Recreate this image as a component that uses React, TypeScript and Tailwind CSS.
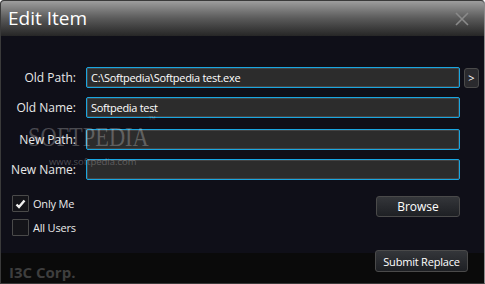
import React from 'react';

const font = { fontFamily: '"Open Sans", "Noto Sans", sans-serif' };

function Field({ label, value }: { label: string; value?: string }) {
  return (
    <div className="flex items-center h-[21px]">
      <span className="w-[75px] text-right text-[12px] text-[#e8e8e8] leading-none">{label}</span>
      <div className="ml-[10px] w-[374px] h-[21px] rounded-[2px] border border-[#1aa6e0] bg-[#2c2c2c] shadow-[inset_0_0_0_1px_#444] flex items-center px-[4px] text-[11px] tracking-[-0.3px] text-white leading-none">
        {value}
      </div>
    </div>
  );
}

function Check({ label, checked }: { label: string; checked?: boolean }) {
  return (
    <div className="flex items-center gap-[4px]">
      <div className="w-[17px] h-[17px] border border-[#4a4a4a] bg-[#141419] rounded-[1px] flex items-center justify-center">
        {checked && (
          <svg width="11" height="10" viewBox="0 0 11 10">
            <path d="M1.5 5.5 L4 8 L9.5 1.5" stroke="#f0f0f0" strokeWidth="2.4" fill="none" />
          </svg>
        )}
      </div>
      <span className="text-[11px] tracking-[-0.2px] text-[#eaeaea] leading-none">{label}</span>
    </div>
  );
}

export default function App() {
  return (
    <div style={font} className="relative w-[485px] h-[284px] bg-[#0f0f18] border border-[#3a3a3a] border-r-[#8a8a8a] rounded-t-[4px] overflow-hidden flex flex-col">
      {/* Title bar */}
      <div className="h-[35px] shrink-0 bg-gradient-to-b from-[#9e9e9e] via-[#5a5a5a] to-[#262626] flex items-center justify-between pl-[7px] pr-[15px]">
        <span className="text-[19px] text-white leading-none -mt-[1px]">Edit Item</span>
        <svg width="14" height="14" viewBox="0 0 14 14">
          <path d="M1 1 L13 13 M13 1 L1 13" stroke="#8a8a8a" strokeWidth="1.6" />
        </svg>
      </div>

      {/* Body */}
      <div className="flex-1 flex flex-col">
        <div className="pt-[31px] flex flex-col">
          <div className="flex items-center">
            <Field label="Old Path:" value="C:\Softpedia\Softpedia test.exe" />
            <div className="ml-[4px] w-[15px] h-[20px] rounded-[3px] border border-[#4a4a4a] bg-[#2a2a2e] flex items-center justify-center text-[11px] text-white leading-none">&gt;</div>
          </div>
          <div className="mt-[9px]"><Field label="Old Name:" value="Softpedia test" /></div>
          <div className="mt-[11px]"><Field label="New Path:" /></div>
          <div className="mt-[9px]"><Field label="New Name:" /></div>
        </div>

        <div className="mt-[15px] flex justify-between pl-[11px] pr-[24px]">
          <div className="flex flex-col gap-[7px]">
            <Check label="Only Me" checked />
            <Check label="All Users" />
          </div>
          <div className="mt-[1px] w-[84px] h-[21px] rounded-[3px] border border-[#4a4a4a] bg-gradient-to-b from-[#34363a] to-[#1e2024] flex items-center justify-center text-[12px] text-white leading-none">
            Browse
          </div>
        </div>
      </div>

      {/* Footer */}
      <div className="h-[30px] shrink-0 bg-[#0a0a0a] flex items-center justify-between pl-[8px] pr-[16px]">
        <span className="text-[15px] font-bold text-[#3e3e3e] leading-none mt-[8px]">I3C Corp.</span>
        <div className="-mt-[14px] w-[93px] h-[22px] rounded-[3px] border border-[#4a4a4a] bg-gradient-to-b from-[#34363a] to-[#1e2024] flex items-center justify-center text-[11px] tracking-[-0.2px] text-white leading-none">
          Submit Replace
        </div>
      </div>

      {/* Watermark overlay */}
      <div className="absolute left-[27px] top-[122px] pointer-events-none select-none">
        <div className="origin-left scale-x-[0.8] text-[28px] text-white/25 leading-none whitespace-nowrap" style={{ fontFamily: '"Liberation Serif", serif' }}>
          SOFTPEDIA<sup className="text-[9px] align-top">™</sup>
        </div>
        <div className="mt-[6px] ml-[21px] text-[9.5px] text-white/25 leading-none">www.softpedia.com</div>
      </div>
    </div>
  );
}
